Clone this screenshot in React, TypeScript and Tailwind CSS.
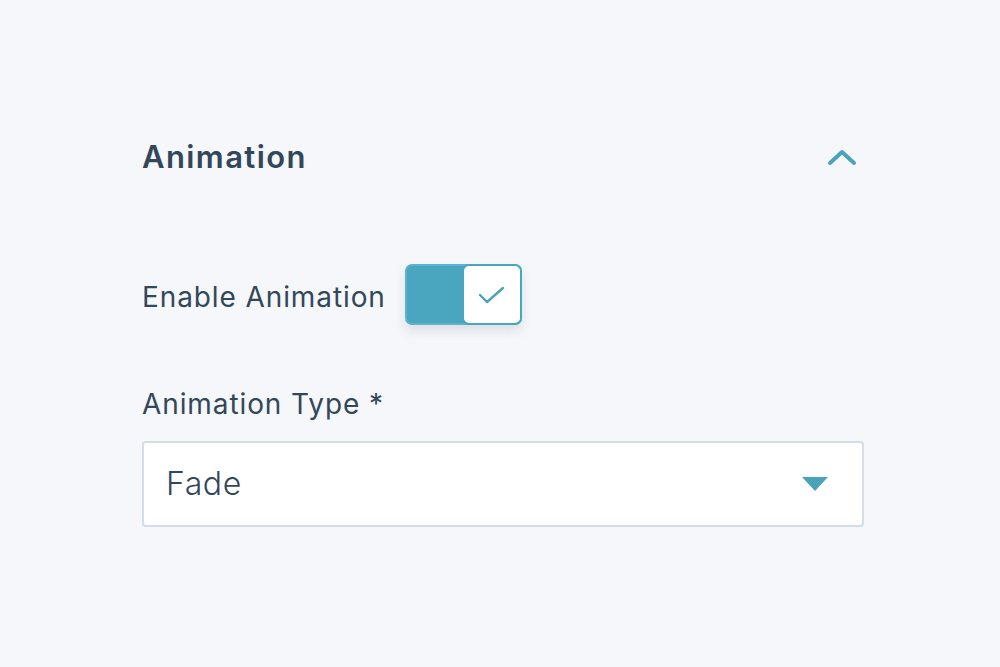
import { useState } from 'react'

const font = { fontFamily: 'Inter, "Noto Sans", sans-serif' }

function ChevronUp() {
  return (
    <svg width="30" height="18" viewBox="0 0 30 18" fill="none" stroke="#4aa3bb" strokeWidth="4" strokeLinecap="round" strokeLinejoin="round">
      <path d="M3 15 L15 4 L27 15" />
    </svg>
  )
}

function Toggle({ on, onChange }: { on: boolean; onChange: (v: boolean) => void }) {
  return (
    <button
      onClick={() => onChange(!on)}
      className="relative flex w-[117px] h-[61px] rounded-[7px] bg-[#4aa5be] border-2 border-[#5db4ca] shadow-[0_6px_12px_rgba(40,60,80,0.12)] cursor-default"
    >
      <span className="ml-auto -mr-[2px] -my-[2px] flex items-center justify-center w-[60px] h-[61px] rounded-[7px] bg-white border-2 border-[#4aa5be]">
        {on && (
          <svg width="27" height="18" viewBox="0 0 27 18" fill="none" stroke="#4aa3bb" strokeWidth="2.4" strokeLinecap="round" strokeLinejoin="round">
            <path d="M2 9 L9 16 L25 2" />
          </svg>
        )}
      </span>
    </button>
  )
}

export default function App() {
  const [enabled, setEnabled] = useState(true)
  const [open, setOpen] = useState(true)

  return (
    <div className="w-[1000px] h-[667px] bg-[#f5f7fa] text-[#33475b]" style={font}>
      <div className="ml-[142px] w-[722px] pt-[136px] flex flex-col">
        <div className="flex items-center justify-between h-[42px]">
          <h2 className="text-[31px] font-semibold tracking-[1.4px]">Animation</h2>
          <button onClick={() => setOpen(!open)} className="mr-[7px] cursor-default">
            <ChevronUp />
          </button>
        </div>

        <div className="flex items-center gap-[19px] mt-[86px]">
          <span className="text-[28px] tracking-[0.9px] pt-[4px]">Enable Animation</span>
          <Toggle on={enabled} onChange={setEnabled} />
        </div>

        <label className="mt-[62px] text-[28px] tracking-[0.9px] leading-[34px]">Animation Type *</label>

        <div className="mt-[20px] h-[86px] rounded-[4px] border-2 border-[#d3dde8] bg-white flex items-center justify-between pl-[22px] pr-[34px]">
          <span className="text-[32px] font-light tracking-[0.6px]">Fade</span>
          <svg width="26" height="14" viewBox="0 0 26 14">
            <path d="M0 0 H26 L13 14 Z" fill="#4aa3bb" />
          </svg>
        </div>
      </div>
    </div>
  )
}
